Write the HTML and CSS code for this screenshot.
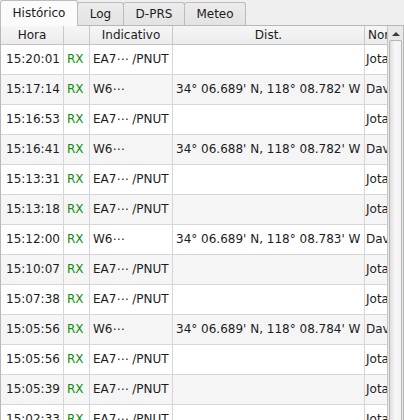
FILE: index.html
```html
<!DOCTYPE html>
<html lang="es">
<head>
<meta charset="utf-8">
<title>Histórico</title>
<link rel="stylesheet" href="styles.css">
</head>
<body>
<div class="window">
  <div class="tabbar">
    <div class="tab active w-hist">Histórico</div>
    <div class="tab w-log">Log</div>
    <div class="tab w-dprs">D-PRS</div>
    <div class="tab w-meteo">Meteo</div>
  </div>
  <div class="pane">
    <div class="view">
      <div class="grid">
        <div class="hcell">Hora</div>
        <div class="hcell"></div>
        <div class="hcell">Indicativo</div>
        <div class="hcell">Dist.</div>
        <div class="hcell left">Nombre</div>

        <div class="row"><span class="c c-time">15:20:01</span><span class="c c-dir">RX</span><span class="c c-call">EA7⋯ /PNUT</span><span class="c c-dist"></span><span class="c c-name">Jota</span></div>
        <div class="row alt"><span class="c c-time">15:17:14</span><span class="c c-dir">RX</span><span class="c c-call">W6⋯</span><span class="c c-dist">34° 06.689' N, 118° 08.782' W</span><span class="c c-name">David</span></div>
        <div class="row"><span class="c c-time">15:16:53</span><span class="c c-dir">RX</span><span class="c c-call">EA7⋯ /PNUT</span><span class="c c-dist"></span><span class="c c-name">Jota</span></div>
        <div class="row alt"><span class="c c-time">15:16:41</span><span class="c c-dir">RX</span><span class="c c-call">W6⋯</span><span class="c c-dist">34° 06.688' N, 118° 08.782' W</span><span class="c c-name">David</span></div>
        <div class="row"><span class="c c-time">15:13:31</span><span class="c c-dir">RX</span><span class="c c-call">EA7⋯ /PNUT</span><span class="c c-dist"></span><span class="c c-name">Jota</span></div>
        <div class="row alt"><span class="c c-time">15:13:18</span><span class="c c-dir">RX</span><span class="c c-call">EA7⋯ /PNUT</span><span class="c c-dist"></span><span class="c c-name">Jota</span></div>
        <div class="row"><span class="c c-time">15:12:00</span><span class="c c-dir">RX</span><span class="c c-call">W6⋯</span><span class="c c-dist">34° 06.689' N, 118° 08.783' W</span><span class="c c-name">David</span></div>
        <div class="row alt"><span class="c c-time">15:10:07</span><span class="c c-dir">RX</span><span class="c c-call">EA7⋯ /PNUT</span><span class="c c-dist"></span><span class="c c-name">Jota</span></div>
        <div class="row"><span class="c c-time">15:07:38</span><span class="c c-dir">RX</span><span class="c c-call">EA7⋯ /PNUT</span><span class="c c-dist"></span><span class="c c-name">Jota</span></div>
        <div class="row alt"><span class="c c-time">15:05:56</span><span class="c c-dir">RX</span><span class="c c-call">W6⋯</span><span class="c c-dist">34° 06.689' N, 118° 08.784' W</span><span class="c c-name">David</span></div>
        <div class="row"><span class="c c-time">15:05:56</span><span class="c c-dir">RX</span><span class="c c-call">EA7⋯ /PNUT</span><span class="c c-dist"></span><span class="c c-name">Jota</span></div>
        <div class="row alt"><span class="c c-time">15:05:39</span><span class="c c-dir">RX</span><span class="c c-call">EA7⋯ /PNUT</span><span class="c c-dist"></span><span class="c c-name">Jota</span></div>
        <div class="row"><span class="c c-time">15:02:33</span><span class="c c-dir">RX</span><span class="c c-call">EA7⋯ /PNUT</span><span class="c c-dist"></span><span class="c c-name">Jota</span></div>
      </div>
    </div>
    <div class="vscroll">
      <div class="arrow-up"></div>
      <div class="thumb"></div>
    </div>
  </div>
</div>
</body>
</html>
```

FILE: styles.css
```css
html, body {
  margin: 0;
  padding: 0;
}

body {
  width: 404px;
  height: 420px;
  overflow: hidden;
  background: #efefef;
  color: #1c1c1c;
  font-family: "DejaVu Sans", "Noto Sans", sans-serif;
  font-size: 12px;
}

.window {
  display: flex;
  flex-direction: column;
  height: 420px;
}

/* tab strip */
.tabbar {
  display: flex;
  align-items: flex-end;
  height: 25px;
  flex: none;
}

.tab {
  box-sizing: border-box;
  height: 23px;
  display: flex;
  align-items: center;
  justify-content: center;
  margin-left: -1px;
  border: 1px solid #bcbcbc;
  border-bottom: none;
  border-radius: 3px 3px 0 0;
  background: linear-gradient(#ececec, #e3e3e3);
  color: #1c1c1c;
}

.tab.active {
  position: relative;
  z-index: 1;
  height: 26px;
  margin-bottom: -1px;
  margin-left: 0;
  padding-bottom: 1px;
  background: #fbfbfb;
}

.w-hist { width: 78px; }
.w-log { width: 47px; }
.w-dprs { width: 62px; }
.w-meteo { width: 62px; }

/* tab page */
.pane {
  flex: 1;
  display: flex;
  min-height: 0;
  border: 1px solid #b8b8b8;
  border-bottom: none;
  background: #ffffff;
}

.view {
  flex: 1;
  min-width: 0;
  overflow: hidden;
}

.grid {
  display: grid;
  grid-template-columns: 63px 26px 83px 192px 80px;
  grid-auto-rows: 30px;
  grid-template-rows: 19px;
}

.hcell {
  box-sizing: border-box;
  display: flex;
  align-items: center;
  justify-content: center;
  white-space: nowrap;
  overflow: hidden;
  background: linear-gradient(#f6f6f6, #ececec);
  border-right: 1px solid #c9c9c9;
  border-bottom: 1px solid #c4c4c4;
  color: #1c1c1c;
}

.hcell.left {
  justify-content: flex-start;
  padding-left: 3px;
}

.row {
  display: contents;
}

.c {
  box-sizing: border-box;
  display: flex;
  align-items: center;
  white-space: nowrap;
  overflow: hidden;
  background: #ffffff;
  border-right: 1px solid #d6d6d6;
  border-bottom: 1px solid #d6d6d6;
  padding-bottom: 1px;
}

.row.alt .c {
  background: #f5f5f5;
}

.c-time { padding-left: 5px; }
.c-dir { padding-left: 3px; color: #0c8f0c; }
.c-call { padding-left: 3px; }
.c-dist { padding-left: 3px; }
.c-name { padding-left: 1px; }

/* vertical scroll bar */
.vscroll {
  box-sizing: border-box;
  width: 16px;
  flex: none;
  display: flex;
  flex-direction: column;
  align-items: center;
  border-left: 1px solid #c6c6c6;
  background: #e8e8e8;
}

.arrow-up {
  width: 0;
  height: 0;
  margin-top: 6px;
  border-left: 4px solid transparent;
  border-right: 4px solid transparent;
  border-bottom: 4px solid #3a3a3a;
}

.thumb {
  box-sizing: border-box;
  width: 13px;
  flex: 1;
  margin-top: 4px;
  border: 1px solid #b7b7b7;
  border-bottom: none;
  border-radius: 2px 2px 0 0;
  background: linear-gradient(90deg, #dedede, #f7f7f7 45%, #f3f3f3);
}
```
